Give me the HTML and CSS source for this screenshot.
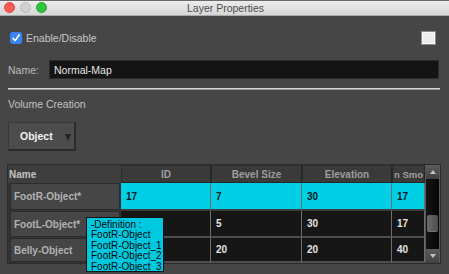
FILE: index.html
```html
<!DOCTYPE html>
<html>
<head>
<meta charset="utf-8">
<link rel="stylesheet" href="styles.css">
</head>
<body>
<div class="titlebar">
  <div class="lights">
    <span class="light red"></span>
    <span class="light gray"></span>
    <span class="light green"></span>
  </div>
  <div class="title">Layer Properties</div>
</div>
<div class="content">
  <div class="enable-row">
    <span class="checkbox">
      <svg width="12" height="12" viewBox="0 0 12 12"><path d="M3 6.3 L5.2 8.6 L9.2 2.8" fill="none" stroke="#fff" stroke-width="1.6" stroke-linecap="round" stroke-linejoin="round"/></svg>
    </span>
    <span class="enable-label">Enable/Disable</span>
    <span class="swatch"></span>
  </div>
  <div class="name-row">
    <span class="name-label">Name:</span>
    <div class="name-input">Normal-Map</div>
  </div>
  <div class="separator"></div>
  <div class="section-label">Volume Creation</div>
  <div class="dropdown">
    <span class="dropdown-text">Object</span>
    <span class="dropdown-arrow"></span>
  </div>
  <div class="table-wrap">
    <div class="table">
      <div class="grid">
        <div class="hcell hname">Name</div>
        <div class="hcell">ID</div>
        <div class="hcell">Bevel Size</div>
        <div class="hcell">Elevation</div>
        <div class="hcell hclip">n Smo</div>

        <div class="rcell-wrap"><div class="rcell">FootR-Object*</div></div>
        <div class="dcell sel">17</div>
        <div class="dcell sel">7</div>
        <div class="dcell sel">30</div>
        <div class="dcell sel">17</div>

        <div class="rcell-wrap"><div class="rcell">FootL-Object*</div></div>
        <div class="dcell"></div>
        <div class="dcell">5</div>
        <div class="dcell">30</div>
        <div class="dcell">17</div>

        <div class="rcell-wrap"><div class="rcell">Belly-Object</div></div>
        <div class="dcell"></div>
        <div class="dcell">20</div>
        <div class="dcell">20</div>
        <div class="dcell">40</div>
      </div>
      <div class="scrollbar">
        <div class="sb-btn"><span class="tri-up"></span></div>
        <div class="sb-track">
          <div class="sb-thumb"></div>
        </div>
        <div class="sb-btn"><span class="tri-down"></span></div>
      </div>
    </div>
    <div class="tooltip">
      <div>-Definition :</div>
      <div>FootR-Object</div>
      <div>FootR-Object_1</div>
      <div>FootR-Object_2</div>
      <div>FootR-Object_3</div>
    </div>
  </div>
</div>
</body>
</html>
```
FILE: styles.css
```css
* { box-sizing: border-box; }
html, body { margin: 0; padding: 0; }
body {
  width: 449px;
  height: 274px;
  overflow: hidden;
  background: #464646;
  font-family: "Liberation Sans", Arial, sans-serif;
  font-size: 10.5px;
  color: #c4c4c4;
}
.titlebar {
  position: relative;
  height: 16px;
  border-top: 1px solid #6a6a6a;
  border-bottom: 1px solid #a9a9a9;
  background: linear-gradient(#ececec, #d6d6d6);
  display: flex;
  align-items: center;
  justify-content: center;
}
.lights {
  position: absolute;
  left: 4px;
  top: 1px;
  display: flex;
  gap: 5px;
}
.light {
  width: 11px;
  height: 11px;
  border-radius: 50%;
  display: block;
}
.red { background: #fc5b55; border: 1px solid #e0453f; }
.gray { background: #d0d0d0; border: 1px solid #bcbcbc; }
.green { background: #2fc43f; border: 1px solid #23a631; }
.title {
  color: #4b4b4b;
  font-size: 10.5px;
  margin-left: 2px;
  margin-top: -1px;
}
.content {
  padding: 0 8px;
}
.enable-row {
  margin-top: 15px;
  height: 14px;
  display: flex;
  align-items: center;
}
.checkbox {
  width: 12px;
  height: 12px;
  margin-left: 2px;
  border-radius: 3px;
  background: #3784f2;
  display: flex;
}
.enable-label {
  margin-left: 4px;
  color: #c6c6c6;
}
.swatch {
  margin-left: auto;
  margin-right: 5px;
  width: 15px;
  height: 14px;
  background: #ececec;
  border: 1px solid #8a8a8a;
  box-shadow: inset 0 0 0 1px #fafafa;
}
.name-row {
  margin-top: 15px;
  height: 19px;
  display: flex;
  align-items: center;
}
.name-label {
  width: 41px;
  color: #bdbdbd;
}
.name-input {
  flex: 1;
  height: 19px;
  margin-right: 2px;
  background: #141414;
  border: 1px solid #2c2c2c;
  color: #e6e6e6;
  padding-left: 4px;
  display: flex;
  align-items: center;
}
.separator {
  margin-top: 9px;
  margin-right: 1px;
  height: 2px;
  border-top: 1px solid #d4d4d4;
  border-bottom: 1px solid #9a9a9a;
}
.section-label {
  margin-top: 8px;
  height: 13px;
  line-height: 13px;
  color: #c2c2c2;
}
.dropdown {
  margin-top: 11px;
  width: 68px;
  height: 29px;
  background: #4c4c4c;
  border: 1px solid #3a3a3a;
  border-right: 2px solid #2b2b2b;
  border-bottom: 2px solid #2b2b2b;
  display: flex;
  align-items: center;
  position: relative;
}
.dropdown-text {
  margin-left: 11px;
  font-weight: bold;
  color: #f2f2f2;
}
.dropdown-arrow {
  margin-left: auto;
  margin-right: 3px;
  width: 0;
  height: 0;
  border-left: 3.5px solid transparent;
  border-right: 3.5px solid transparent;
  border-top: 7px solid #232323;
  margin-top: 2px;
}
.table-wrap {
  position: relative;
  margin-top: 13px;
  margin-left: -1px;
}
.table {
  width: 434px;
  height: 100px;
  border: 1px solid #2c2c2c;
  background: #383838;
  display: flex;
}
.grid {
  display: grid;
  grid-template-columns: 113px 90px 91px 90px 33px;
  grid-template-rows: 18px 28px 27px 25px;
}
.hcell {
  background: repeating-linear-gradient(45deg, #3c3c3c 0 1px, #383838 1px 2px);
  border: 1px solid #262626;
  border-left-color: #2a2a2a;
  border-top-color: #333;
  color: #9e9e9e;
  font-size: 10px;
  font-weight: bold;
  display: flex;
  align-items: center;
  justify-content: center;
  overflow: hidden;
  white-space: nowrap;
}
.hname {
  background: #3e3e3e;
  border: none;
  justify-content: flex-start;
  padding-left: 1px;
  color: #c2c2c2;
}
.hclip {
  justify-content: flex-start;
  padding-left: 1px;
  font-size: 9.5px;
}
.rcell-wrap {
  padding: 0 1px 1px 2px;
  background: #343434;
}
.rcell {
  height: 100%;
  background: #464646;
  border: 1px solid #2c2c2c;
  color: #b2b2b2;
  font-size: 10px;
  font-weight: bold;
  padding-left: 3px;
  display: flex;
  align-items: center;
  white-space: nowrap;
}
.dcell {
  background: #161616;
  border-right: 1px solid #6e6e6e;
  border-bottom: 2px solid #4e4e4e;
  color: #e4e4e4;
  font-size: 10px;
  font-weight: bold;
  padding-left: 5px;
  display: flex;
  align-items: center;
}
.dcell.sel {
  background: #00cfe6;
  color: #0b1e22;
  border-bottom-color: #3c3c3c;
}
.scrollbar {
  width: 15px;
  display: flex;
  flex-direction: column;
  border-left: 1px solid #555;
  border-right: 1px solid #5a5a5a;
  background: #0e0e0e;
}
.sb-btn {
  height: 14px;
  background: linear-gradient(#5c5c5c, #404040);
  display: flex;
  align-items: center;
  justify-content: center;
}
.tri-up, .tri-down {
  width: 0;
  height: 0;
  border-left: 3px solid transparent;
  border-right: 3px solid transparent;
}
.tri-up { border-bottom: 4px solid #c2c2c2; }
.tri-down { border-top: 4px solid #c2c2c2; }
.sb-track {
  flex: 1;
  padding-top: 36px;
  background: linear-gradient(90deg, #151515, #050505);
}
.sb-thumb {
  height: 17px;
  margin: 0 1px;
  border-radius: 2px;
  background: linear-gradient(90deg, #6a6a6a, #4e4e4e);
  border-bottom: 1px solid #777;
}
.tooltip {
  position: absolute;
  left: 79px;
  top: 53px;
  width: 78px;
  height: 55px;
  background: #00c8e0;
  border: 1px solid #111;
  padding: 2px 0 0 4px;
  font-family: "Liberation Sans", Arial, sans-serif;
  font-size: 10px;
  line-height: 10.4px;
  color: #0a0a0a;
  white-space: nowrap;
}
```
